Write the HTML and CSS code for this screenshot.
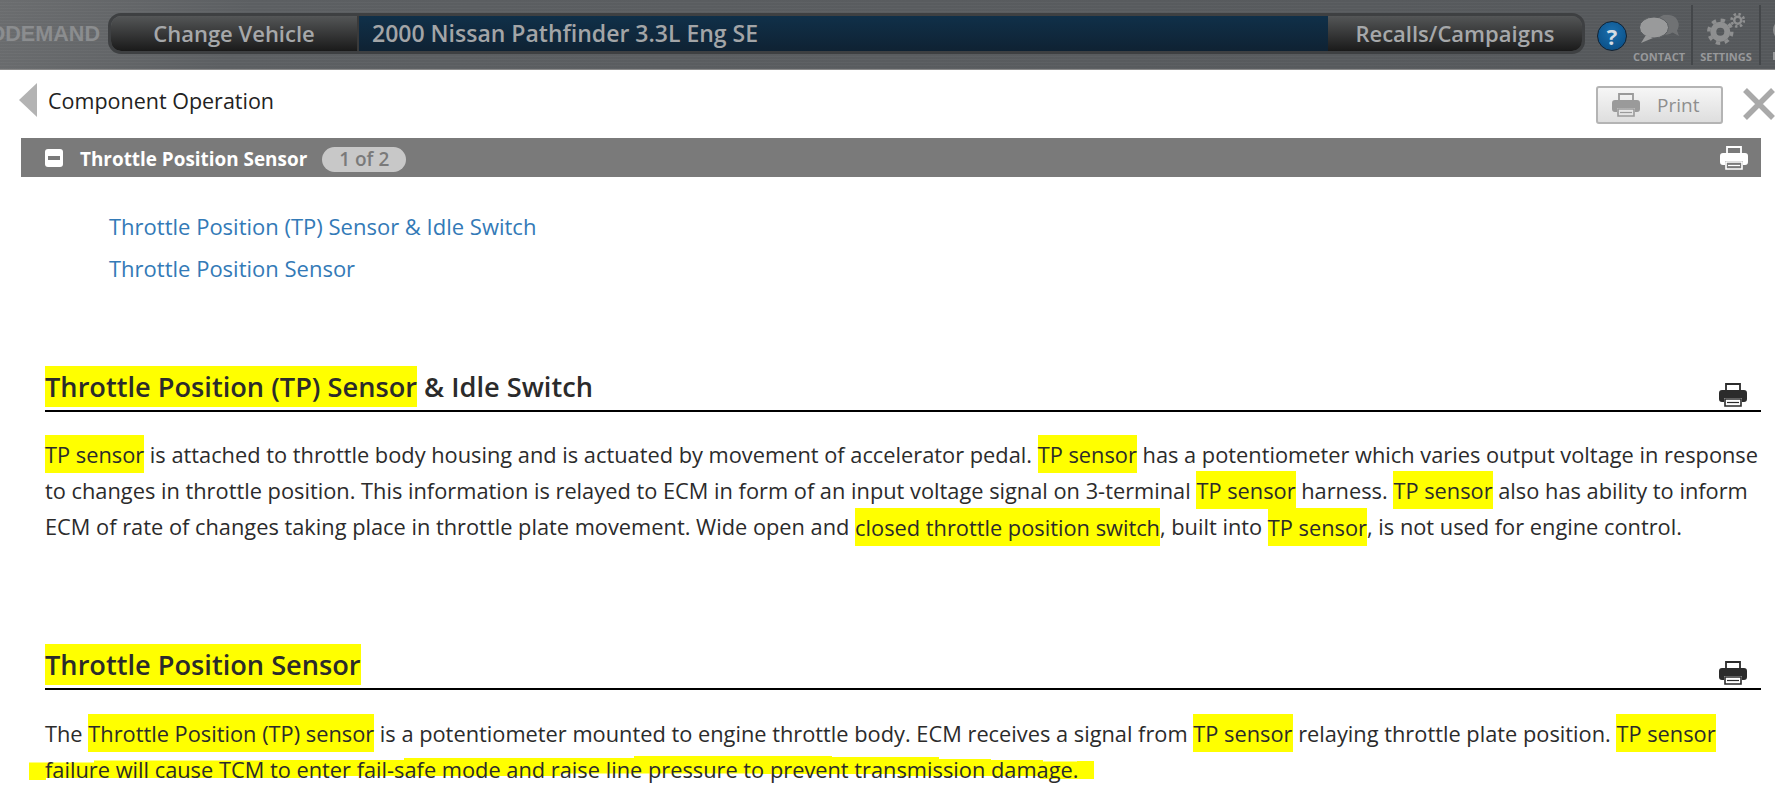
FILE: index.html
```html
<!DOCTYPE html>
<html lang="en">
<head>
    <meta charset="UTF-8">
    <title>Component Operation</title>
    <link rel="stylesheet" href="styles.css">
</head>
<body>
    <svg class="defs" width="0" height="0">
        <symbol id="printer" viewBox="0 0 28 25">
            <path d="M7 9V2h14v7" fill="none" stroke="currentColor" stroke-width="1.8"/>
            <path d="M3 8h22a3 3 0 0 1 3 3v6a3 3 0 0 1-3 3h-2v-4H5v4H3a3 3 0 0 1-3-3v-6a3 3 0 0 1 3-3z" fill="currentColor"/>
            <path d="M6 17h16v7H6z" fill="none" stroke="currentColor" stroke-width="1.6"/>
            <path d="M8 20.5h12" stroke="currentColor" stroke-width="1.2"/>
        </symbol>
    </svg>

    <header class="topbar">
        <div class="logo"><span>ODEMAND</span></div>
        <div class="vehicle-bar">
            <a class="bar-btn bar-btn-left" href="#">Change Vehicle</a>
            <div class="vehicle-name">2000 Nissan Pathfinder 3.3L Eng SE</div>
            <a class="bar-btn bar-btn-right" href="#">Recalls/Campaigns</a>
        </div>
        <a class="help" href="#">?</a>
        <a class="tool tool-contact" href="#">
            <svg class="tool-icon" width="39" height="28" viewBox="0 0 39 28">
                <path d="M29 0a10 10 0 0 1 8 15.500l2 5.500-6.500-3.500A10 10 0 1 1 29 0z" fill="#707274"/>
                <ellipse cx="14" cy="12.500" rx="14.500" ry="10.500" fill="#999a9b" stroke="#5a5d60"/>
                <path d="M6 20 1 28l12-5z" fill="#999a9b"/>
            </svg>
            <span>CONTACT</span>
        </a>
        <a class="tool tool-settings" href="#">
            <svg class="tool-icon tool-icon-gear" width="38" height="32" viewBox="0 0 38 32">
                <g fill="none" stroke="#8e8f90">
                    <circle cx="13.300" cy="18.700" r="7" stroke-width="6"/>
                    <circle cx="13.300" cy="18.700" r="11.500" stroke-width="3.500" stroke-dasharray="4.400 4.630"/>
                    <circle cx="30.700" cy="7.300" r="3.500" stroke-width="2.400"/>
                    <circle cx="30.700" cy="7.300" r="6.200" stroke-width="2.600" stroke-dasharray="2.400 2.470"/>
                </g>
            </svg>
            <span>SETTINGS</span>
        </a>
        <a class="tool tool-more" href="#">
            <svg width="14" height="60" viewBox="0 0 14 60">
                <circle cx="23" cy="25" r="11" fill="#8e8f90"/>
                <rect x="12" y="47" width="2" height="8" fill="#98999b"/>
            </svg>
        </a>
    </header>

    <div class="page-head">
        <span class="back-arrow"></span>
        <h1>Component Operation</h1>
        <button class="print-btn">
            <svg class="print-icon" width="28" height="25"><use href="#printer"/></svg>
            Print
        </button>
        <svg class="close-x" width="32" height="32" viewBox="0 0 32 32">
            <path d="M2 2l28 28M30 2 2 30" stroke="#a9a9a9" stroke-width="5.500"/>
        </svg>
    </div>

    <div class="group-bar">
        <span class="collapse-icon"></span>
        <span class="group-title">Throttle Position Sensor</span>
        <span class="pill">1 of 2</span>
        <svg class="group-print" width="28" height="25"><use href="#printer"/></svg>
    </div>

    <ul class="toc">
        <li><a href="#">Throttle Position (TP) Sensor &amp; Idle Switch</a></li>
        <li><a href="#">Throttle Position Sensor</a></li>
    </ul>

    <article class="doc-section">
        <div class="doc-title">
            <h2><mark>Throttle Position (TP) Sensor</mark> &amp; Idle Switch</h2>
            <svg width="28" height="25"><use href="#printer"/></svg>
        </div>
        <p><mark>TP sensor</mark> is attached to throttle body housing and is actuated by movement of accelerator pedal. <mark>TP sensor</mark> has a potentiometer which varies output voltage in response<br>to changes in throttle position. This information is relayed to ECM in form of an input voltage signal on 3-terminal <mark>TP sensor</mark> harness. <mark>TP sensor</mark> also has ability to inform<br>ECM of rate of changes taking place in throttle plate movement. Wide open and <mark>closed throttle position switch</mark>, built into <mark>TP sensor</mark>, is not used for engine control.</p>
    </article>

    <article class="doc-section doc-section-last">
        <div class="doc-title">
            <h2><mark>Throttle Position Sensor</mark></h2>
            <svg width="28" height="25"><use href="#printer"/></svg>
        </div>
        <p class="marked-up">The <mark>Throttle Position (TP) sensor</mark> is a potentiometer mounted to engine throttle body. ECM receives a signal from <mark>TP sensor</mark> relaying throttle plate position. <mark>TP sensor</mark><br>failure will cause TCM to enter fail-safe mode and raise line pressure to prevent transmission damage.
            <svg class="scribble" width="1066" height="24" viewBox="0 0 1066 24">
                <path d="M0 6.500H65V4.500H232V4H375V2H605V0H803V1H910V3H962V4H1014V5.500H1048V5H1065V23H1011V20H871V18H731V17.500H531V20H271V22H17V24H0z" fill="#ffff00"/>
            </svg>
        </p>
    </article>
</body>
</html>
```

FILE: styles.css
```css
html, body {
    margin: 0;
    padding: 0;
    height: 100%;
    overflow: hidden;
}
body {
    font-family: "Open Sans", Arial, sans-serif;
    font-size: 21.8px;
    color: #2b2b2b;
    background-color: #fff;
}
.defs {
    position: absolute;
}

.topbar {
    display: flex;
    align-items: center;
    height: 70px;
    box-sizing: border-box;
    border-bottom: 1px solid #8a8a8a;
    background: repeating-linear-gradient(0deg, rgba(255,255,255,.03) 0 1px, transparent 1px 3px),
        linear-gradient(115deg, #6b6d6f 0, #5c5f62 14%, #55585b 100%);
    overflow: hidden;
}
.logo {
    width: 100px;
    margin: -2px 8px 0 0;
    display: flex;
    justify-content: flex-end;
    overflow: hidden;
    font-family: "Liberation Sans", Arial, sans-serif;
    font-weight: bold;
    font-size: 21.6px;
    color: #8b8d8f;
}
.vehicle-bar {
    display: flex;
    width: 1477px;
    height: 41px;
    box-sizing: border-box;
    margin-top: -3px;
    border: 3px solid #3e4042;
    border-radius: 13px;
    overflow: hidden;
    font-size: 22px;
    flex-shrink: 0;
}
.bar-btn {
    display: flex;
    align-items: center;
    justify-content: center;
    font-weight: 600;
    color: #a6a8aa;
    text-decoration: none;
    background: linear-gradient(#545657, #1a1a1a);
}
.bar-btn-left {
    width: 246px;
    border-right: 2px solid #3a3a3a;
}
.bar-btn-right {
    width: 254px;
}
.vehicle-name {
    flex: 1;
    display: flex;
    align-items: center;
    padding-left: 13px;
    font-size: 23px;
    font-weight: 600;
    color: #a3a5a7;
    background: linear-gradient(#103049, #0f2233);
}
.help {
    flex-shrink: 0;
    width: 28px;
    height: 28px;
    margin: 2px 0 0 12px;
    border: 1px solid #123;
    border-radius: 50%;
    background: radial-gradient(circle at 50% 35%, #1b6fae, #07497f);
    color: #d5dde4;
    font-weight: bold;
    font-size: 22px;
    line-height: 28px;
    text-align: center;
    text-decoration: none;
}
.tool {
    flex-shrink: 0;
    display: flex;
    flex-direction: column;
    align-items: center;
    justify-content: flex-end;
    height: 60px;
    padding-bottom: 2px;
    box-sizing: border-box;
    text-decoration: none;
    color: #98999b;
    font-size: 11px;
    line-height: 12px;
    font-weight: 700;
    border-right: 2px solid #44474a;
}
.tool-contact {
    width: 66px;
}
.tool-settings {
    width: 68px;
}
.tool-more {
    width: 14px;
    padding: 0;
    border: none;
}
.tool-icon {
    margin-bottom: 8px;
}
.tool-icon-gear {
    margin-bottom: 6px;
}

.page-head {
    display: flex;
    align-items: center;
    height: 68px;
    padding-left: 19px;
}
.back-arrow {
    width: 0;
    height: 0;
    margin: 0 11px 8px 0;
    border-top: 17px solid transparent;
    border-bottom: 17px solid transparent;
    border-right: 18px solid #b3b3b3;
}
.page-head h1 {
    margin: 0 0 7px;
    font-size: 21.5px;
    font-weight: 400;
    color: #222;
}
.print-btn {
    display: flex;
    align-items: center;
    gap: 17px;
    width: 127px;
    height: 38px;
    margin: 1px 20px 0 auto;
    padding: 0 0 0 14px;
    border: 2px solid #b4b4b4;
    border-radius: 3px;
    background: linear-gradient(#f6f6f6, #dedede);
    color: #8e8e8e;
    font-family: inherit;
    font-size: 19px;
}
.print-icon {
    color: #9a9a9a;
}
.close-x {
    flex-shrink: 0;
}

.group-bar {
    display: flex;
    align-items: center;
    height: 39px;
    margin: 0 14px 0 21px;
    padding: 0 13px 0 24px;
    background-color: #7a7a7a;
    color: #fff;
}
.collapse-icon {
    position: relative;
    width: 18px;
    height: 18px;
    margin: 1px 17px 0 0;
    border-radius: 3px;
    background-color: #fff;
}
.collapse-icon::after {
    content: "";
    position: absolute;
    left: 3px;
    right: 3px;
    top: 7px;
    height: 4px;
    background-color: #7a7a7a;
}
.group-title {
    margin-top: 3px;
    font-size: 18.9px;
    font-weight: 700;
}
.pill {
    margin: 3px 0 0 15px;
    padding: 0 17px;
    height: 25px;
    line-height: 25px;
    border-radius: 13px;
    background-color: #c8c8c8;
    color: #7a7a7a;
    font-size: 19px;
    font-weight: 600;
}
.group-print {
    margin-left: auto;
    color: #fff;
}

.toc {
    list-style: none;
    margin: 0;
    padding: 28px 0 0 109px;
    line-height: 42px;
    font-size: 22px;
}
.toc a {
    color: #337ab7;
    text-decoration: none;
}

.doc-section {
    margin: 76px 14px 0 45px;
}
.doc-section-last {
    margin-top: 97.5px;
}
.doc-title {
    display: flex;
    align-items: flex-end;
    justify-content: space-between;
    height: 46.5px;
    box-sizing: border-box;
    border-bottom: 2px solid #000;
    padding: 0 14px 3px 0;
}
h2 {
    margin: 0;
    font-size: 27.2px;
    font-weight: 600;
    line-height: 40px;
    color: #2b2b2b;
}
mark {
    background-color: #ffff00;
    color: inherit;
    padding: 4.5px 0;
}
h2 mark {
    padding: 2px 0;
}
p {
    margin: 25px 0 0;
    line-height: 36.4px;
    white-space: nowrap;
}
.marked-up {
    position: relative;
    margin-top: 26px;
}
/* hand drawn marker line under the last sentence */
.scribble {
    position: absolute;
    left: -16px;
    top: 40px;
    z-index: -1;
}
```
